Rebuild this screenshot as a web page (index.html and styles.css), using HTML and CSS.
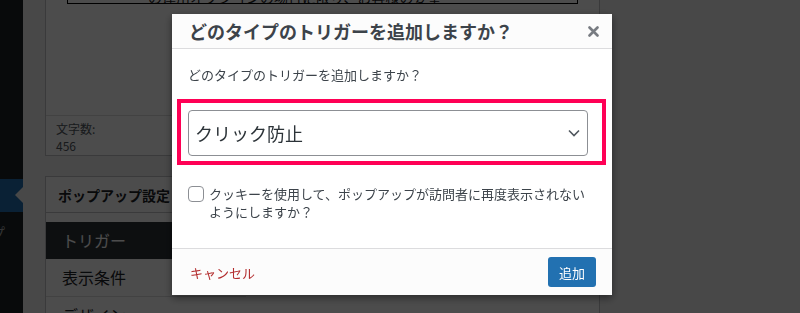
FILE: index.html
```html
<!DOCTYPE html>
<html lang="ja">
<head>
    <meta charset="UTF-8">
    <title>トリガーを追加</title>
    <link rel="stylesheet" href="styles.css">
</head>
<body>
    <!-- Admin menu (cropped) -->
    <div class="sidebar">
        <div class="menu-item current"></div>
        <div class="menu-item"><span class="menu-label">ポップ</span></div>
    </div>

    <!-- Page behind the dialog -->
    <div class="main">
        <div class="panel editor-panel">
            <div class="editor">
                <div class="editor-box"><span>の運用オプションの場合に限り、お客様の要望</span></div>
            </div>
            <div class="word-count">
                <div>文字数:</div>
                <div>456</div>
            </div>
        </div>

        <div class="panel settings-panel">
            <div class="panel-head">ポップアップ設定</div>
            <ul class="tabs">
                <li class="tab active">トリガー</li>
                <li class="tab">表示条件</li>
                <li class="tab">デザイン</li>
            </ul>
        </div>
    </div>

    <!-- Overlay + modal -->
    <div class="backdrop"></div>
    <div class="modal">
        <div class="modal-head">
            <h2>どのタイプのトリガーを追加しますか？</h2>
            <svg class="close" width="11" height="11" viewBox="0 0 11 11"><path d="M1.5 1.5 L9.5 9.5 M9.5 1.5 L1.5 9.5" stroke="#787c82" stroke-width="2.6" stroke-linecap="round"/></svg>
        </div>
        <div class="modal-body">
            <p class="question">どのタイプのトリガーを追加しますか？</p>
            <div class="highlight">
                <div class="select">
                    <span>クリック防止</span>
                    <svg width="12" height="8" viewBox="0 0 12 8"><path d="M1 1.5 L6 6.5 L11 1.5" fill="none" stroke="#50575e" stroke-width="1.6"/></svg>
                </div>
            </div>
            <label class="check-row">
                <span class="checkbox"></span>
                <span class="check-text">クッキーを使用して、ポップアップが訪問者に再度表示されないようにしますか？</span>
            </label>
        </div>
        <div class="modal-foot">
            <a class="cancel">キャンセル</a>
            <button class="add-btn">追加</button>
        </div>
    </div>
</body>
</html>
```

FILE: styles.css
```css
* { box-sizing: border-box; }

body {
    margin: 0;
    height: 313px;
    overflow: hidden;
    display: flex;
    font-family: "Noto Sans CJK JP", "Noto Sans", sans-serif;
    color: #1d2327;
    background: #f0f0f1;
}

/* Left admin menu */
.sidebar { width: 23px; flex-shrink: 0; background: #1d2327; padding-top: 179px; overflow: hidden; }
.menu-item { position: relative; height: 34px; color: #a7aaad; font-size: 14px; line-height: 34px; white-space: nowrap; }
.menu-item.current { background: #2271b1; height: 33px; }
.menu-item.current::after {
    content: "";
    position: absolute;
    right: 0; top: 8px;
    border-top: 8px solid transparent;
    border-bottom: 8px solid transparent;
    border-right: 8px solid #f0f0f1;
}
.menu-label { display: inline-block; margin-left: -37px; margin-top: 3px; }

/* Main content */
.main { flex: 1; padding-left: 22px; }
.panel { width: 555px; background: #fff; border: 1px solid #c3c4c7; }
.editor-panel { border-top: none; }

.editor { height: 115px; padding: 0 21px; }
.editor-box { height: 4px; border: 1px solid #000; border-top: none; overflow: hidden; font-size: 14px; line-height: 14px; padding-left: 80px; }
.editor-box span { display: block; margin-top: -10px; text-decoration: underline; }

.word-count { height: 40px; border-top: 1px solid #dcdcde; padding: 4px 10px 0; font-size: 12px; line-height: 17px; color: #50575e; }

.settings-panel { margin-top: 20px; }
.panel-head { height: 36px; line-height: 36px; padding: 0 12px; font-size: 14px; font-weight: 600; border-bottom: 1px solid #c3c4c7; }
.tabs { list-style: none; margin: 0; padding: 9px 0 0; width: 200px; }
.tab { height: 38px; line-height: 37px; padding-left: 16px; font-size: 16px; border-bottom: 1px solid #dcdcde; }
.tab.active { background: #2c3338; color: #fff; border-bottom: none; height: 37px; }

/* Dark layer over the page */
.backdrop { position: fixed; inset: 0; background: rgba(0, 0, 0, 0.7); }

/* Dialog */
.modal {
    position: fixed;
    left: 172px; top: 14px;
    width: 440px; height: 281px;
    background: #fff;
    display: flex; flex-direction: column;
    box-shadow: 0 3px 8px rgba(0, 0, 0, 0.45);
}
.modal-head {
    height: 35px;
    background: #fcfcfc;
    border-bottom: 1px solid #dcdcde;
    display: flex; align-items: center; justify-content: space-between;
    padding: 0 13px 0 17px;
}
.modal-head h2 { margin: 0; font-size: 18px; font-weight: 700; color: #3c434a; line-height: 24px; }
.close { display: block; margin-top: 1px; }

.modal-body { flex: 1; padding: 16px 16px 0; }
.question { margin: 0; font-size: 13px; line-height: 20px; color: #3c434a; }

.highlight {
    width: 429px;
    margin: 14px 0 0 -11px;
    padding: 7px 14px 5px 7px;
    border: 4px solid #ff0055;
}
.select {
    width: 400px; height: 46px;
    border: 1px solid #8c8f94; border-radius: 4px;
    display: flex; align-items: center; justify-content: space-between;
    padding: 0 7px 0 6px;
    font-size: 18px; color: #2c3338;
}

.check-row { display: flex; align-items: flex-start; margin-top: 21px; }
.checkbox { width: 16px; height: 16px; border: 1px solid #8c8f94; border-radius: 4px; margin: 0 5px 0 0; flex-shrink: 0; }
.check-text { width: 382px; font-size: 13px; line-height: 18px; color: #3c434a; margin-top: -1px; }

.modal-foot {
    height: 47px;
    background: #fcfcfc;
    border-top: 1px solid #dcdcde;
    display: flex; align-items: center; justify-content: space-between;
    padding: 0 16px 0 18px;
}
.cancel { color: #b32d2e; font-size: 13px; cursor: pointer; }
.add-btn { width: 48px; height: 30px; border: none; border-radius: 3px; background: #2271b1; color: #fff; font-family: inherit; font-size: 13px; padding: 0; }
```
